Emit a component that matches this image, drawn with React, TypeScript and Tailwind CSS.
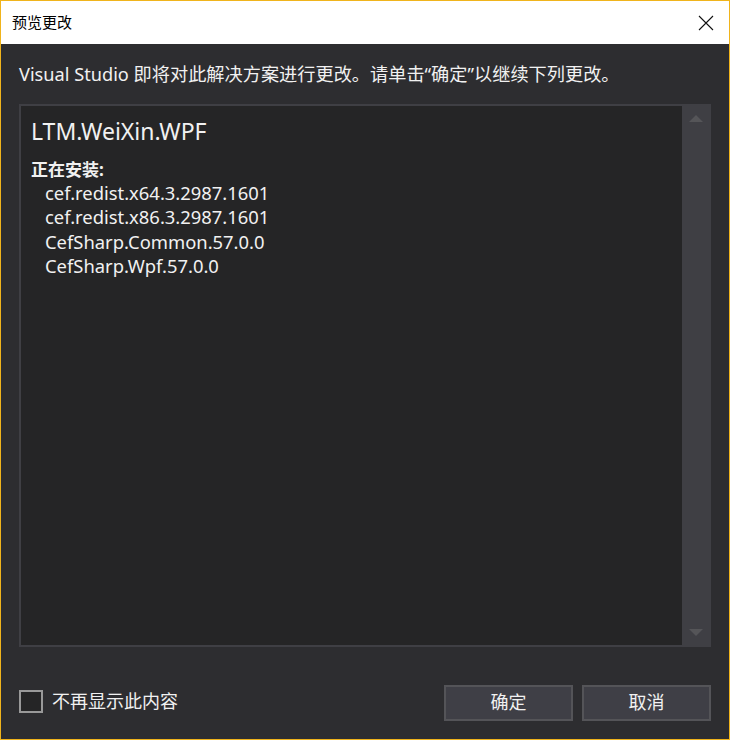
import React from "react";

const font = { fontFamily: '"Noto Sans", "Noto Sans CJK SC", sans-serif' };

export default function App() {
  return (
    <div
      className="w-[730px] h-[740px] border border-[#f0b41c] bg-[#2d2d30] flex flex-col"
      style={font}
    >
      <div className="h-[43px] bg-white flex items-center justify-between pl-[11px] pr-[15px] shrink-0">
        <span className="text-[15px] text-black leading-none">预览更改</span>
        <svg width="16" height="16" viewBox="0 0 16 16">
          <path d="M1 1 L15 15 M15 1 L1 15" stroke="#111" strokeWidth="1.1" />
        </svg>
      </div>
      <div className="flex-1 flex flex-col px-[18px]">
        <div className="h-[60px] flex items-center pt-[2px] text-[18.2px] text-[#f1f1f1] shrink-0 whitespace-nowrap">
          Visual Studio 即将对此解决方案进行更改。请单击“确定”以继续下列更改。
        </div>
        <div className="h-[543px] border-2 border-[#3f3f44] bg-[#3f3f44] flex shrink-0">
          <div className="flex-1 bg-[#252526] pl-[10px] pt-[10px] text-[#f1f1f1]">
            <div className="text-[23px] leading-[30px]">LTM.WeiXin.WPF</div>
            <div className="mt-[13px] text-[17px] font-bold leading-[21px]">正在安装:</div>
            <div className="pl-[14px] text-[18.4px] leading-[24.4px] pt-[1px]">
              <div>cef.redist.x64.3.2987.1601</div>
              <div>cef.redist.x86.3.2987.1601</div>
              <div>CefSharp.Common.57.0.0</div>
              <div>CefSharp.Wpf.57.0.0</div>
            </div>
          </div>
          <div className="w-[27px] flex flex-col items-center justify-between py-[9px]">
            <svg width="14" height="7" viewBox="0 0 14 7">
              <path d="M7 0 L14 7 L0 7 Z" fill="#555558" />
            </svg>
            <svg width="14" height="7" viewBox="0 0 14 7">
              <path d="M0 0 L14 0 L7 7 Z" fill="#555558" />
            </svg>
          </div>
        </div>
        <div className="flex-1 flex items-center justify-between pt-[19px]">
          <label className="flex items-center gap-[9px] mt-[-2px]">
            <span className="w-[24px] h-[23px] border-2 border-[#999999] bg-[#252526]" />
            <span className="text-[18px] text-[#f1f1f1]">不再显示此内容</span>
          </label>
          <div className="flex gap-[9px]">
            <button className="w-[129px] h-[36px] border-2 border-[#545458] bg-[#3f3f46] text-[18px] text-[#f1f1f1]">
              确定
            </button>
            <button className="w-[129px] h-[36px] border-2 border-[#545458] bg-[#3f3f46] text-[18px] text-[#f1f1f1]">
              取消
            </button>
          </div>
        </div>
      </div>
    </div>
  );
}
